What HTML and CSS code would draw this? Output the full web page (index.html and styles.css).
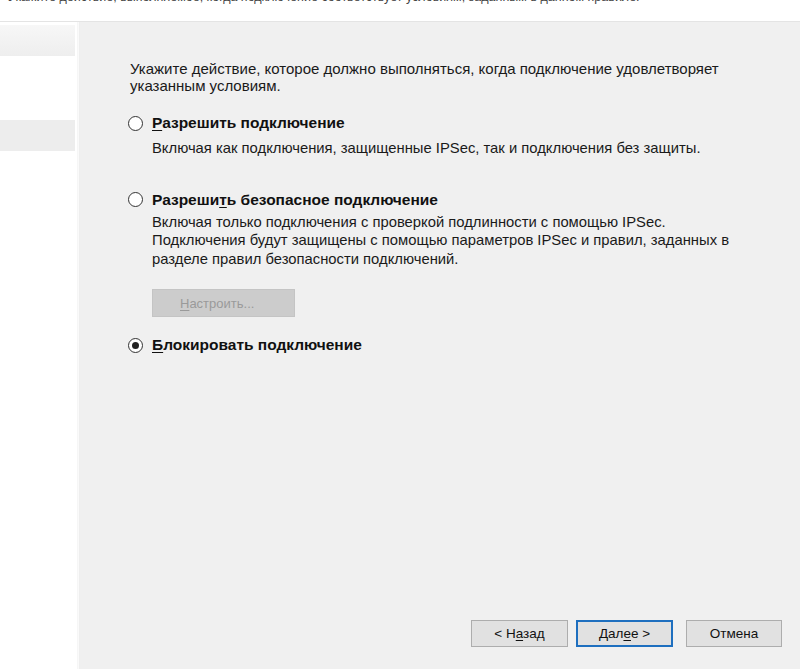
FILE: index.html
```html
<!DOCTYPE html>
<html lang="ru">
<head>
<meta charset="utf-8">
<link rel="stylesheet" href="styles.css">
</head>
<body>
<div class="window">
  <div class="header">
    <div class="header-text">Укажите действие, выполняемое, когда подключение соответствует условиям, заданным в данном правиле.</div>
  </div>
  <div class="main">
    <div class="steps">
      <div class="steps-head"></div>
      <div class="step"></div>
      <div class="step"></div>
      <div class="step selected"></div>
    </div>
    <div class="divider"></div>
    <div class="content">
      <p class="intro">Укажите действие, которое должно выполняться, когда подключение удовлетворяет<br>указанным условиям.</p>

      <div class="option">
        <div class="opt-row">
          <span class="radio"></span>
          <span class="opt-label"><u>Р</u>азрешить подключение</span>
        </div>
        <p class="opt-desc">Включая как подключения, защищенные IPSec, так и подключения без защиты.</p>
      </div>

      <div class="option second">
        <div class="opt-row">
          <span class="radio"></span>
          <span class="opt-label">Разреши<u>т</u>ь безопасное подключение</span>
        </div>
        <p class="opt-desc tight">Включая только подключения с проверкой подлинности с помощью IPSec.<br>Подключения будут защищены с помощью параметров IPSec и правил, заданных в<br>разделе правил безопасности подключений.</p>
        <button class="btn-disabled" disabled><u>Н</u>астроить...</button>
      </div>

      <div class="option third">
        <div class="opt-row">
          <span class="radio checked"></span>
          <span class="opt-label"><u>Б</u>локировать подключение</span>
        </div>
      </div>

      <div class="footer">
        <button class="btn">&lt; Н<u>а</u>зад</button>
        <button class="btn default"><u>Д</u>ал<u>е</u>е &gt;</button>
        <button class="btn cancel">Отмена</button>
      </div>
    </div>
  </div>
</div>
</body>
</html>
```
FILE: styles.css
```css
* { box-sizing: border-box; }
html, body {
  margin: 0;
  padding: 0;
  width: 800px;
  height: 669px;
  overflow: hidden;
  background: #f0f0f0;
  font-family: "Liberation Sans", Arial, sans-serif;
  color: #1a1a1a;
}
.window {
  display: flex;
  flex-direction: column;
  height: 669px;
}
.header {
  height: 22px;
  background: #ffffff;
  border-bottom: 1px solid #e4e4e4;
  overflow: hidden;
}
.header-text {
  margin-top: -11px;
  padding-left: 8px;
  font-size: 12.5px;
  line-height: 16px;
  color: #444;
  white-space: nowrap;
}
.main {
  flex: 1;
  display: flex;
}
.steps {
  width: 77px;
  background: #ffffff;
  padding-top: 3px;
  display: flex;
  flex-direction: column;
}
.steps-head {
  height: 31px;
  background: linear-gradient(#f7f7f7, #eeeeee);
  margin-right: 2px;
}
.step {
  height: 32px;
}
.step.selected {
  height: 31px;
  background: #ededed;
  margin-right: 2px;
}
.divider {
  width: 3px;
  background: linear-gradient(90deg, #f4f4f4, #fafafa, #e8e8e8);
}
.content {
  flex: 1;
  background: #f0f0f0;
  padding: 38px 0 0 48px;
  display: flex;
  flex-direction: column;
}
.intro {
  margin: 0 0 0 2px;
  font-size: 15px;
  line-height: 17px;
  white-space: nowrap;
}
.option {
  margin-top: 21px;
}
.option.second {
  margin-top: 34px;
}
.option.third {
  margin-top: 20px;
}
.opt-row {
  display: flex;
  align-items: center;
  gap: 9px;
  height: 16px;
}
.radio {
  width: 15px;
  height: 15px;
  border: 1.5px solid #333;
  border-radius: 50%;
  background: #fff;
  display: flex;
  align-items: center;
  justify-content: center;
  flex: none;
}
.radio.checked::after {
  content: "";
  width: 7px;
  height: 7px;
  border-radius: 50%;
  background: #222;
}
.opt-label {
  font-weight: bold;
  font-size: 15.5px;
  color: #111;
}
.opt-label u, .btn u, .btn-disabled u {
  text-decoration: underline;
  text-underline-offset: 2px;
}
.opt-desc {
  margin: 8px 0 0 24px;
  font-size: 14.8px;
  line-height: 18.5px;
  white-space: nowrap;
}
.opt-desc.tight {
  margin-top: 5px;
}
.btn-disabled {
  margin: 21px 0 0 24px;
  width: 143px;
  height: 28px;
  background: #cccccc;
  border: 1px solid #c4c4c4;
  color: #9a9a9a;
  font-family: "Liberation Sans", Arial, sans-serif;
  font-size: 13px;
  text-align: left;
  padding-left: 27px;
}
.footer {
  margin-top: auto;
  margin-bottom: 22px;
  display: flex;
  gap: 8px;
  padding-left: 343px;
}
.btn {
  width: 97px;
  height: 27px;
  background: #e1e1e1;
  border: 1px solid #adadad;
  font-family: "Liberation Sans", Arial, sans-serif;
  font-size: 13.5px;
  color: #111;
  padding: 0;
}
.btn.default {
  border: 2px solid #1e6fbf;
}
.btn.cancel {
  margin-left: 5px;
  width: 96px;
}
```
